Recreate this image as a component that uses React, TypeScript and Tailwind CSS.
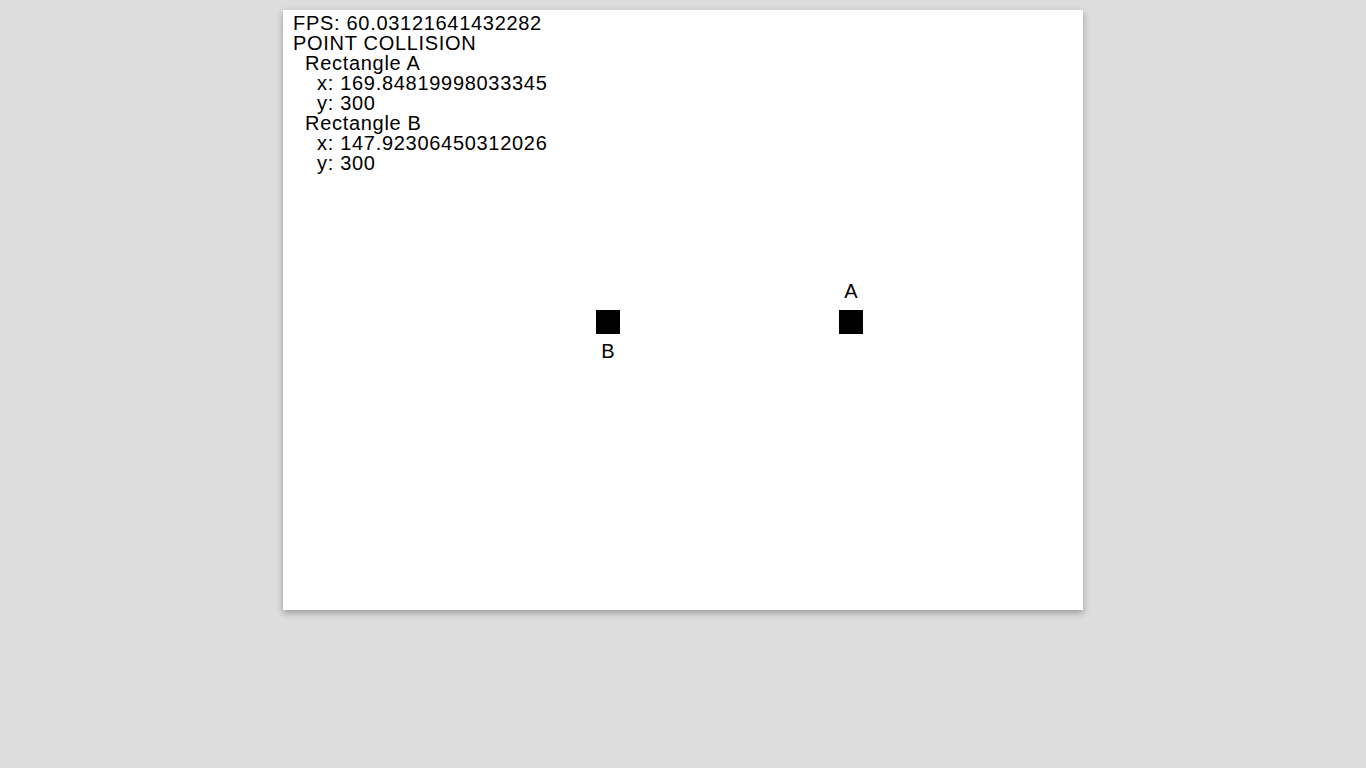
export default function App() {
  return (
    <div className="min-h-[768px] w-full bg-[#dddddd] pt-[10px]" style={{ fontFamily: '"Liberation Sans", Arial, sans-serif' }}>
      <div className="relative mx-auto h-[600px] w-[800px] bg-white shadow-[0_3px_7px_rgba(0,0,0,0.3)]">
        <div className="pl-[10px] pt-[3px] text-[20px] leading-[20px] tracking-[0.7px] text-black">
          <div>FPS: 60.03121641432282</div>
          <div>POINT COLLISION</div>
          <div className="pl-[12px]">
            <div>Rectangle A</div>
            <div className="pl-[12px]">
              <div>x: 169.84819998033345</div>
              <div>y: 300</div>
            </div>
            <div>Rectangle B</div>
            <div className="pl-[12px]">
              <div>x: 147.92306450312026</div>
              <div>y: 300</div>
            </div>
          </div>
        </div>
        <div className="absolute left-[556px] top-[300px] h-[24px] w-[24px] bg-black" />
        <div className="absolute left-[313px] top-[300px] h-[24px] w-[24px] bg-black" />
        <div className="absolute left-[548px] top-[271px] w-[40px] text-center text-[20px] leading-[20px] text-black">A</div>
        <div className="absolute left-[305px] top-[331px] w-[40px] text-center text-[20px] leading-[20px] text-black">B</div>
      </div>
    </div>
  );
}
